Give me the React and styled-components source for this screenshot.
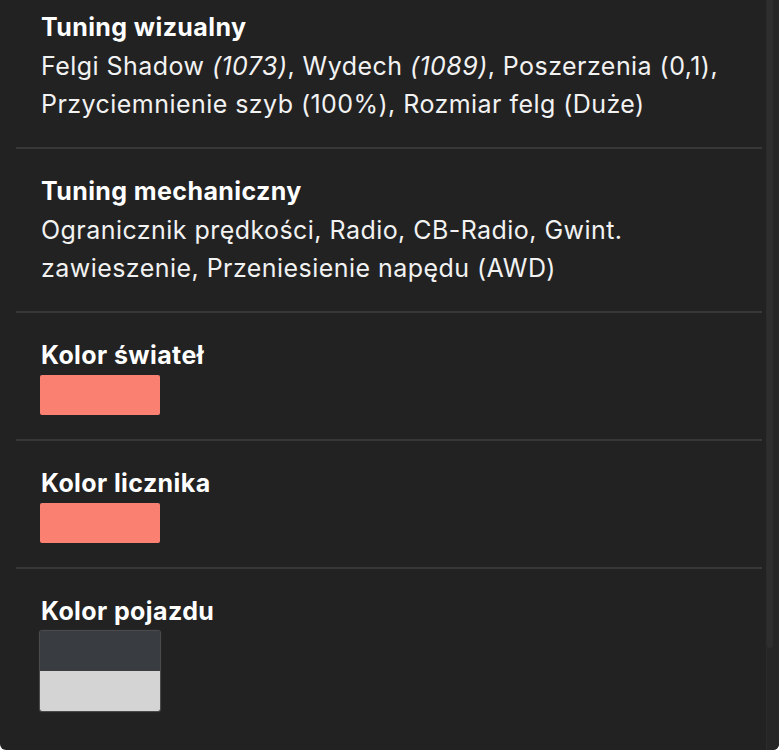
import React from "react";
import styled, { createGlobalStyle } from "styled-components";

const GlobalStyle = createGlobalStyle`
  html, body {
    margin: 0;
    padding: 0;
    background: #ffffff;
  }
  body {
    font-family: Inter, "Noto Sans", "Liberation Sans", sans-serif;
    -webkit-font-smoothing: antialiased;
  }
`;

const Panel = styled.div`
  display: flex;
  width: 779px;
  height: 750px;
  background: #222222;
  border-radius: 0 0 6px 6px;
  overflow: hidden;
`;

const Content = styled.div`
  flex: 1;
  display: flex;
  flex-direction: column;
  padding: 0 4px 0 16px;
`;

const Section = styled.section`
  display: flex;
  flex-direction: column;
  gap: 5px;
  padding: ${p => (p.$first ? "12px" : "27px")} 25px 24px;
  border-bottom: ${p => (p.$last ? "none" : "2px solid #383838")};
`;

const Heading = styled.h3`
  margin: 0;
  font-size: 25px;
  line-height: 30px;
  font-weight: 700;
  color: #ffffff;
  letter-spacing: 0.4px;
`;

const Body = styled.p`
  margin: 0;
  font-size: 25px;
  line-height: 38px;
  font-weight: 400;
  color: #f2f2f2;
  letter-spacing: 0.45px;

  em {
    font-style: italic;
  }
`;

const Swatch = styled.div`
  display: flex;
  flex-direction: column;
  width: 120px;
  margin-left: -1px;
  border-radius: 2px;
  overflow: hidden;
  box-shadow: ${p => (p.$outlined ? "0 0 0 1px #4a4a4a, 0 0 3px rgba(255,255,255,0.15)" : "none")};
`;

const SwatchPart = styled.div`
  height: 40px;
  background: ${p => p.$color};
`;

const ScrollTrack = styled.div`
  width: 12px;
  background: #262626;
  border-left: 1px solid #2b2b2b;
`;

const ScrollThumb = styled.div`
  width: 6px;
  height: 648px;
  background: #2e2e2e;
  border-radius: 0 0 3px 3px;
`;

const sections = [
  {
    title: "Tuning wizualny",
    text: (
      <>
        Felgi Shadow <em>(1073)</em>, Wydech <em>(1089)</em>, Poszerzenia (0,1),
        Przyciemnienie szyb (100%), Rozmiar felg (Duże)
      </>
    ),
  },
  {
    title: "Tuning mechaniczny",
    text: (
      <>
        Ogranicznik prędkości, Radio, CB-Radio, Gwint. zawieszenie, Przeniesienie
        napędu (AWD)
      </>
    ),
  },
  { title: "Kolor świateł", colors: ["#fa8072"] },
  { title: "Kolor licznika", colors: ["#fa8072"] },
  { title: "Kolor pojazdu", colors: ["#393d42", "#d4d4d4"], outlined: true },
];

export default function App() {
  return (
    <>
      <GlobalStyle />
      <Panel>
        <Content>
          {sections.map((s, i) => (
            <Section key={s.title} $first={i === 0} $last={i === sections.length - 1}>
              <Heading>{s.title}</Heading>
              {s.text && <Body>{s.text}</Body>}
              {s.colors && (
                <Swatch $outlined={s.outlined}>
                  {s.colors.map((c, j) => (
                    <SwatchPart key={j} $color={c} />
                  ))}
                </Swatch>
              )}
            </Section>
          ))}
        </Content>
        <ScrollTrack>
          <ScrollThumb />
        </ScrollTrack>
      </Panel>
    </>
  );
}
